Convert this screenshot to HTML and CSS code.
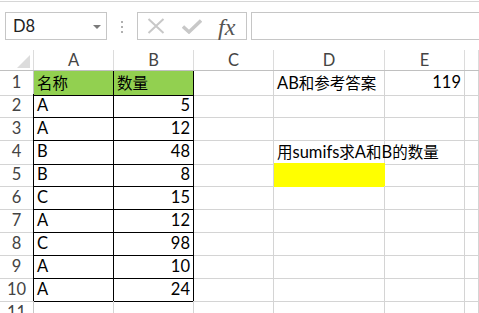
FILE: index.html
```html
<!DOCTYPE html>
<html lang="zh-CN">

<head>
    <meta charset="UTF-8">
    <title>sumifs</title>
    <link rel="stylesheet" href="styles.css">
</head>

<body>
    <div class="toolbar">
        <div class="name-box">
            <span>D8</span>
            <i class="drop"></i>
        </div>
        <div class="grip"><i></i></div>
        <div class="fx-buttons">
            <svg class="cancel" width="18" height="16" viewBox="0 0 18 16">
                <path d="M1.5 1 L16.5 15 M16.5 1 L1.5 15" stroke="#c8c8c8" stroke-width="2" fill="none" />
            </svg>
            <svg class="enter" width="20" height="15" viewBox="0 0 20 15">
                <path d="M1 7.5 L7 13 L19 1.5" stroke="#c8c8c8" stroke-width="3.4" fill="none" />
            </svg>
            <span class="fx">fx</span>
        </div>
        <div class="formula"></div>
    </div>

    <div class="sheet">
        <div class="row head">
            <div class="corner"><i></i></div>
            <div>A</div>
            <div>B</div>
            <div>C</div>
            <div>D</div>
            <div>E</div>
            <div></div>
        </div>
        <div class="row">
            <div class="num">1</div>
            <div class="cell boxed green"><span class="zh">名称</span></div>
            <div class="cell boxed green"><span class="zh">数量</span></div>
            <div class="cell"></div>
            <div class="cell">AB<span class="zh">和参考答案</span></div>
            <div class="cell r">119</div>
            <div class="cell"></div>
        </div>
        <div class="row">
            <div class="num edge">2</div>
            <div class="cell boxed">A</div>
            <div class="cell boxed r">5</div>
            <div class="cell"></div>
            <div class="cell"></div>
            <div class="cell"></div>
            <div class="cell"></div>
        </div>
        <div class="row">
            <div class="num edge">3</div>
            <div class="cell boxed">A</div>
            <div class="cell boxed r">12</div>
            <div class="cell"></div>
            <div class="cell"></div>
            <div class="cell"></div>
            <div class="cell"></div>
        </div>
        <div class="row">
            <div class="num edge">4</div>
            <div class="cell boxed">B</div>
            <div class="cell boxed r">48</div>
            <div class="cell"></div>
            <div class="cell"><span class="zh">用</span>sumifs<span class="zh">求</span>A<span class="zh">和</span>B<span class="zh">的数量</span></div>
            <div class="cell"></div>
            <div class="cell"></div>
        </div>
        <div class="row">
            <div class="num edge">5</div>
            <div class="cell boxed">B</div>
            <div class="cell boxed r">8</div>
            <div class="cell"></div>
            <div class="cell yellow"></div>
            <div class="cell"></div>
            <div class="cell"></div>
        </div>
        <div class="row">
            <div class="num edge">6</div>
            <div class="cell boxed">C</div>
            <div class="cell boxed r">15</div>
            <div class="cell"></div>
            <div class="cell"></div>
            <div class="cell"></div>
            <div class="cell"></div>
        </div>
        <div class="row">
            <div class="num edge">7</div>
            <div class="cell boxed">A</div>
            <div class="cell boxed r">12</div>
            <div class="cell"></div>
            <div class="cell"></div>
            <div class="cell"></div>
            <div class="cell"></div>
        </div>
        <div class="row">
            <div class="num edge">8</div>
            <div class="cell boxed">C</div>
            <div class="cell boxed r">98</div>
            <div class="cell"></div>
            <div class="cell"></div>
            <div class="cell"></div>
            <div class="cell"></div>
        </div>
        <div class="row">
            <div class="num edge">9</div>
            <div class="cell boxed">A</div>
            <div class="cell boxed r">10</div>
            <div class="cell"></div>
            <div class="cell"></div>
            <div class="cell"></div>
            <div class="cell"></div>
        </div>
        <div class="row">
            <div class="num edge">10</div>
            <div class="cell boxed">A</div>
            <div class="cell boxed r">24</div>
            <div class="cell"></div>
            <div class="cell"></div>
            <div class="cell"></div>
            <div class="cell"></div>
        </div>
        <div class="row">
            <div class="num">11</div>
            <div class="cell"></div>
            <div class="cell"></div>
            <div class="cell"></div>
            <div class="cell"></div>
            <div class="cell"></div>
            <div class="cell"></div>
        </div>
    </div>
</body>

</html>
```
FILE: styles.css
```css
html,
body {
    margin: 0;
    background: #fff;
    overflow: hidden;
}

body {
    font-family: Lato, "Noto Sans CJK SC", sans-serif;
    font-size: 16.5px;
    color: #000;
}

.zh {
    font-family: "Noto Sans CJK SC", sans-serif;
    font-size: 15.5px;
}

/* formula bar */
.toolbar {
    display: flex;
    margin-top: 1px;
    border-top: 1px solid #d6d6d6;
    padding: 10px 0 10px 5px;
    height: 28px;
}

.name-box {
    box-sizing: border-box;
    width: 102px;
    height: 28px;
    border: 1px solid #c6c6c6;
    display: flex;
    align-items: center;
    justify-content: space-between;
    padding: 0 5px 0 7px;
    color: #222;
}

.drop {
    width: 0;
    height: 0;
    border-left: 4px solid transparent;
    border-right: 4px solid transparent;
    border-top: 4px solid #7a7a7a;
    margin-top: 1px;
}

.grip {
    width: 30px;
    display: flex;
    justify-content: center;
    padding-top: 9px;
}

.grip i {
    display: block;
    width: 2px;
    height: 2px;
    background: #b0b0b0;
    box-shadow: 0 5px 0 #b0b0b0, 0 10px 0 #b0b0b0;
}

.fx-buttons {
    box-sizing: border-box;
    width: 110px;
    height: 28px;
    border: 1px solid #c6c6c6;
    display: flex;
    align-items: center;
}

.cancel {
    margin-left: 9px;
}

.enter {
    margin-left: 17px;
    margin-top: 1px;
}

.fx {
    margin-left: 16px;
    font-family: "Liberation Serif", serif;
    font-style: italic;
    font-size: 24px;
    color: #555;
    line-height: 1;
    margin-top: 1px;
}

.formula {
    flex: 1;
    margin-left: 4px;
    margin-right: -2px;
    height: 28px;
    box-sizing: border-box;
    border: 1px solid #c6c6c6;
}

/* grid */
.row {
    display: grid;
    grid-template-columns: 34px 80px 80px 80px 111px 80px 1fr;
    height: 23px;
    line-height: 23px;
}

.row > div {
    box-sizing: border-box;
    white-space: nowrap;
}

.head {
    height: 20px;
    line-height: 20px;
    color: #444;
    text-align: center;
    border-bottom: 1px solid #c0c0c0;
}

.head > div {
    border-right: 1px solid #dcdcdc;
}

.corner {
    display: flex;
    justify-content: flex-end;
    align-items: flex-end;
    padding: 0 3px 2px 0;
}

.corner i {
    width: 0;
    height: 0;
    border-left: 13px solid transparent;
    border-bottom: 13px solid #dcdcdc;
}

.num {
    text-align: center;
    color: #444;
    border-right: 1px solid #c6c6c6;
    border-bottom: 1px solid #d4d4d4;
}

.num.edge {
    border-right-color: #000;
}

.cell {
    padding: 0 3px;
    border-right: 1px solid #d4d4d4;
    border-bottom: 1px solid #d4d4d4;
}

.cell.r {
    text-align: right;
}

.cell.boxed {
    border-right-color: #000;
    border-bottom-color: #000;
}

.green {
    background: #92d050;
}

.yellow {
    background: #ffff00;
    border-right-color: #ffff00;
    border-bottom-color: #ffff00;
}
```
